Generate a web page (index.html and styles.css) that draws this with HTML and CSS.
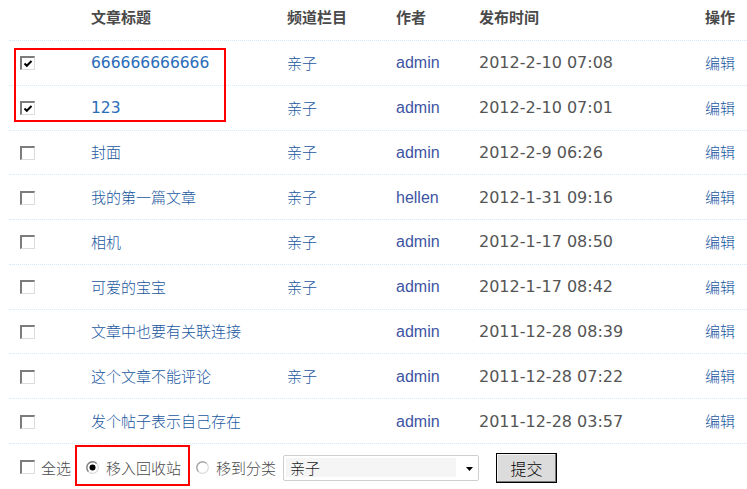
FILE: index.html
```html
<!DOCTYPE html>
<html lang="zh">
<head>
<meta charset="utf-8">
<title>文章列表</title>
<link rel="stylesheet" href="styles.css">
</head>
<body>
<div class="page">
  <div class="list">
    <div class="row head">
      <div class="c1"></div>
      <div>文章标题</div>
      <div>频道栏目</div>
      <div>作者</div>
      <div>发布时间</div>
      <div>操作</div>
    </div>

    <div class="row">
      <div class="c1"><span class="cb checked"><svg viewBox="0 0 10 10" width="10" height="10"><path d="M1.5 4.5 L3.8 6.8 L8.5 2" fill="none" stroke="#000" stroke-width="2"/></svg></span></div>
      <div><a class="link num">666666666666</a></div>
      <div><a class="link">亲子</a></div>
      <div><a class="author">admin</a></div>
      <div class="date">2012-2-10 07:08</div>
      <div><a class="link">编辑</a></div>
    </div>
    <div class="row">
      <div class="c1"><span class="cb checked"><svg viewBox="0 0 10 10" width="10" height="10"><path d="M1.5 4.5 L3.8 6.8 L8.5 2" fill="none" stroke="#000" stroke-width="2"/></svg></span></div>
      <div><a class="link num">123</a></div>
      <div><a class="link">亲子</a></div>
      <div><a class="author">admin</a></div>
      <div class="date">2012-2-10 07:01</div>
      <div><a class="link">编辑</a></div>
    </div>
    <div class="row">
      <div class="c1"><span class="cb"></span></div>
      <div><a class="link">封面</a></div>
      <div><a class="link">亲子</a></div>
      <div><a class="author">admin</a></div>
      <div class="date">2012-2-9 06:26</div>
      <div><a class="link">编辑</a></div>
    </div>
    <div class="row">
      <div class="c1"><span class="cb"></span></div>
      <div><a class="link">我的第一篇文章</a></div>
      <div><a class="link">亲子</a></div>
      <div><a class="author">hellen</a></div>
      <div class="date">2012-1-31 09:16</div>
      <div><a class="link">编辑</a></div>
    </div>
    <div class="row">
      <div class="c1"><span class="cb"></span></div>
      <div><a class="link">相机</a></div>
      <div><a class="link">亲子</a></div>
      <div><a class="author">admin</a></div>
      <div class="date">2012-1-17 08:50</div>
      <div><a class="link">编辑</a></div>
    </div>
    <div class="row">
      <div class="c1"><span class="cb"></span></div>
      <div><a class="link">可爱的宝宝</a></div>
      <div><a class="link">亲子</a></div>
      <div><a class="author">admin</a></div>
      <div class="date">2012-1-17 08:42</div>
      <div><a class="link">编辑</a></div>
    </div>
    <div class="row">
      <div class="c1"><span class="cb"></span></div>
      <div><a class="link">文章中也要有关联连接</a></div>
      <div></div>
      <div><a class="author">admin</a></div>
      <div class="date">2011-12-28 08:39</div>
      <div><a class="link">编辑</a></div>
    </div>
    <div class="row">
      <div class="c1"><span class="cb"></span></div>
      <div><a class="link">这个文章不能评论</a></div>
      <div><a class="link">亲子</a></div>
      <div><a class="author">admin</a></div>
      <div class="date">2011-12-28 07:22</div>
      <div><a class="link">编辑</a></div>
    </div>
    <div class="row">
      <div class="c1"><span class="cb"></span></div>
      <div><a class="link">发个帖子表示自己存在</a></div>
      <div></div>
      <div><a class="author">admin</a></div>
      <div class="date">2011-12-28 03:57</div>
      <div><a class="link">编辑</a></div>
    </div>

    <div class="actions">
      <span class="cb"></span>
      <span class="lbl l-all">全选</span>
      <svg class="radio r1" viewBox="0 0 13 13" width="13" height="13">
        <circle cx="6.5" cy="6.5" r="5.8" fill="#fff" stroke="#d8d8d8" stroke-width="1.2"/>
        <path d="M2.4 10.6 A5.8 5.8 0 0 1 10.6 2.4" fill="none" stroke="#808080" stroke-width="1.4"/>
        <circle cx="6.5" cy="6.5" r="3" fill="#000"/>
      </svg>
      <span class="lbl l-r">移入回收站</span>
      <svg class="radio r2" viewBox="0 0 13 13" width="13" height="13">
        <circle cx="6.5" cy="6.5" r="5.8" fill="#fff" stroke="#d8d8d8" stroke-width="1.2"/>
        <path d="M2.4 10.6 A5.8 5.8 0 0 1 10.6 2.4" fill="none" stroke="#a0a0a0" stroke-width="1.2"/>
      </svg>
      <span class="lbl l-r">移到分类</span>
      <div class="select">
        <span class="sel-val">亲子</span>
        <svg class="sel-arrow" viewBox="0 0 7 4" width="7" height="4"><path d="M0 0 H7 L3.5 4 Z" fill="#000"/></svg>
      </div>
      <button class="btn" type="button">提交</button>
    </div>
  </div>

  <div class="mark mark-rows"></div>
  <div class="mark mark-recycle"></div>
</div>
</body>
</html>
```

FILE: styles.css
```css
* { box-sizing: border-box; }

html, body {
  margin: 0;
  padding: 0;
  background: #fff;
}

body {
  font-family: "DejaVu Sans", "Noto Sans CJK SC", sans-serif;
  font-size: 15px;
  color: #555;
}

.page {
  position: relative;
  width: 747px;
  height: 489px;
  overflow: hidden;
}

.list {
  margin-left: 9px;
  width: 738px;
}

.row {
  display: grid;
  grid-template-columns: 82px 196px 109px 83px 226px 42px;
  align-items: center;
  height: 44.78px;
  border-bottom: 1px dotted #d3eaf8;
  line-height: 18px;
  padding-top: 1px;
}

.row.head {
  height: 41px;
  align-items: start;
  padding-top: 8px;
  font-weight: bold;
  color: #4a4a4a;
  font-family: "Noto Sans CJK SC", sans-serif;
}

.c1 {
  padding-left: 11px;
  display: flex;
  align-items: center;
}

.cb {
  display: inline-flex;
  align-items: center;
  justify-content: center;
  width: 15px;
  height: 14px;
  background: #fff;
  border-style: solid;
  border-width: 2px 1px 1px 2px;
  border-color: #7c7c7c #dcdcdc #dcdcdc #7c7c7c;
}

.cb svg { display: block; }

.link {
  color: #19579f;
  font-family: "Noto Sans CJK SC", sans-serif;
  font-weight: 300;
  text-decoration: none;
}

.link.num {
  font-family: "DejaVu Sans", sans-serif;
  font-weight: normal;
  font-size: 15.5px;
  color: #2a6cb8;
}

.author {
  font-family: "Liberation Sans", sans-serif;
  font-size: 16px;
  color: #3d54a3;
}

.date {
  font-family: "DejaVu Sans", sans-serif;
  font-size: 16px;
  color: #555;
}

.actions {
  display: flex;
  align-items: center;
  height: 46px;
  padding-top: 2px;
  padding-left: 11px;
}

.actions .cb {
  margin-top: -1px;
}

.lbl {
  font-family: "Noto Sans CJK SC", sans-serif;
  font-weight: 300;
  color: #4a4a4a;
  line-height: 18px;
}

.l-all { margin-left: 6px; }
.l-r { margin-left: 7px; }

.radio { display: block; margin-left: 15px; }

.select {
  display: flex;
  align-items: center;
  margin-left: 7px;
  width: 196px;
  height: 26px;
  border: 1px solid #cfcfcf;
  border-radius: 2px;
  background: #fff;
  padding: 2px;
}

.sel-val {
  display: block;
  width: 170px;
  height: 19px;
  background: #f5f5f5;
  padding-left: 4px;
  line-height: 19px;
  color: #222;
  font-family: "Noto Sans CJK SC", sans-serif;
  font-weight: 300;
}

.sel-arrow {
  display: block;
  margin-left: 10px;
  margin-top: 2px;
}

.btn {
  margin-left: 17px;
  width: 61px;
  height: 30px;
  padding: 0;
  background: #dcdcdc;
  border: 1px solid #000;
  box-shadow: inset -1px -1px 0 #7a7a7a, inset 1px 1px 0 #f4f4f4;
  font-family: "Noto Sans CJK SC", sans-serif;
  font-weight: 300;
  font-size: 16px;
  color: #000;
  line-height: 26px;
}

.mark {
  position: absolute;
  border: 2px solid #f00;
  pointer-events: none;
}

.mark-rows {
  left: 14px;
  top: 48px;
  width: 212px;
  height: 74px;
}

.mark-recycle {
  left: 75px;
  top: 445px;
  width: 115px;
  height: 41px;
}
```
